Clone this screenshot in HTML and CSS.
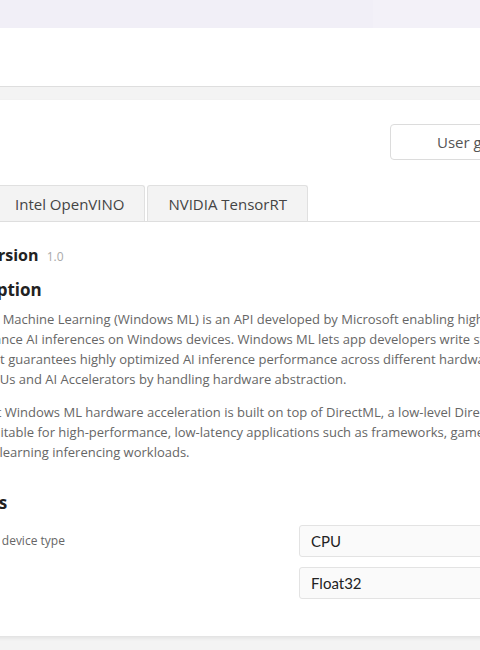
FILE: index.html
```html
<!DOCTYPE html>
<html lang="en">
<head>
<meta charset="utf-8">
<title>Execution provider</title>
<link rel="stylesheet" href="styles.css">
</head>
<body>
  <div class="topbar"><div class="topbar-fade"></div></div>
  <header class="header"></header>
  <main class="main">
    <section class="card">
      <div class="toolbar">
        <button class="btn">User guide</button>
      </div>
      <nav class="tabs">
        <div class="tab tab-active">Windows ML</div>
        <div class="tab">Intel OpenVINO</div>
        <div class="tab">NVIDIA TensorRT</div>
      </nav>
      <h2 class="h-version">SDK version <span class="ver">1.0</span></h2>
      <h3 class="h-section">Description</h3>
      <p class="para">Windows Machine Learning (Windows ML) is an API developed by Microsoft enabling high-<br>performance AI inferences on Windows devices. Windows ML lets app developers write standard<br>code, as it guarantees highly optimized AI inference performance across different hardware like<br>CPUs, GPUs and AI Accelerators by handling hardware abstraction.</p>
      <p class="para">Note that Windows ML hardware acceleration is built on top of DirectML, a low-level DirectX 12<br>library suitable for high-performance, low-latency applications such as frameworks, games and<br>machine learning inferencing workloads.</p>
      <h3 class="h-section h-settings">Targets</h3>
      <div class="form">
        <div class="row">
          <label class="label">Execution device type</label>
          <div class="select">CPU</div>
        </div>
        <div class="row">
          <label class="label">Precision</label>
          <div class="select">Float32</div>
        </div>
      </div>
    </section>
  </main>
</body>
</html>
```
FILE: styles.css
```css
* { box-sizing: border-box; }
html, body { margin: 0; padding: 0; }
body {
  width: 480px;
  height: 650px;
  overflow: hidden;
  background: #f3f3f3;
  font-family: "Open Sans", "Noto Sans", sans-serif;
}
.topbar {
  height: 28px;
  background: #f3f1f8;
}
.topbar-fade {
  width: 373px;
  height: 28px;
  background: #f1eff7;
}
.header {
  height: 59px;
  background: #ffffff;
  border-bottom: 1px solid #dedede;
}
.main {
  padding-top: 13px;
  background: #f3f3f3;
}
.card {
  margin-left: -76px;
  width: 700px;
  height: 536px;
  padding: 24px 20px 0 20px;
  background: #ffffff;
  box-shadow: 0 2px 4px rgba(0,0,0,0.08);
}
.toolbar {
  display: flex;
  justify-content: flex-start;
  padding-left: 446px;
}
.btn {
  height: 36px;
  padding: 0 46px;
  border: 1px solid #dcdcdc;
  border-radius: 4px;
  background: #fff;
  font-family: "Open Sans", sans-serif;
  font-size: 15px;
  color: #555;
  white-space: nowrap;
}
.tabs {
  display: flex;
  gap: 2px;
  margin-top: 25px;
  margin-left: -83px;
  border-bottom: 1px solid #dedede;
}
.tab {
  height: 36px;
  padding: 0 20px;
  display: flex;
  align-items: center;
  background: #f3f3f3;
  border: 1px solid #e0e0e0;
  border-bottom: none;
  border-radius: 3px 3px 0 0;
  font-size: 15px;
  color: #444;
  white-space: nowrap;
}
.tab-active { background: #fff; }
.h-version {
  margin: 22px 0 0 0;
  font-size: 16px;
  font-weight: 700;
  color: #222;
  line-height: 22px;
}
.ver {
  margin-left: 4px;
  font-size: 12px;
  font-weight: 400;
  color: #aaa;
}
.h-section {
  margin: 10px 0 0 0;
  font-size: 17px;
  font-weight: 700;
  color: #222;
  line-height: 24px;
}
.para {
  margin: 7px 0 0 0;
  width: 680px;
  font-size: 13px;
  line-height: 20px;
  color: #666;
  white-space: nowrap;
}
.para + .para { margin-top: 13px; }
.h-settings { margin-top: 29px; }
.form { margin-top: 10px; display: flex; flex-direction: column; gap: 10px; }
.row { display: flex; align-items: flex-start; }
.label {
  width: 355px;
  padding-top: 7px;
  font-size: 12px;
  color: #666;
}
.select {
  width: 300px;
  height: 32px;
  padding-left: 11px;
  display: flex;
  align-items: center;
  background: #fafafa;
  border: 1px solid #e3e3e3;
  border-radius: 3px;
  font-family: "Lato", sans-serif;
  font-size: 15px;
  color: #222;
}
```
